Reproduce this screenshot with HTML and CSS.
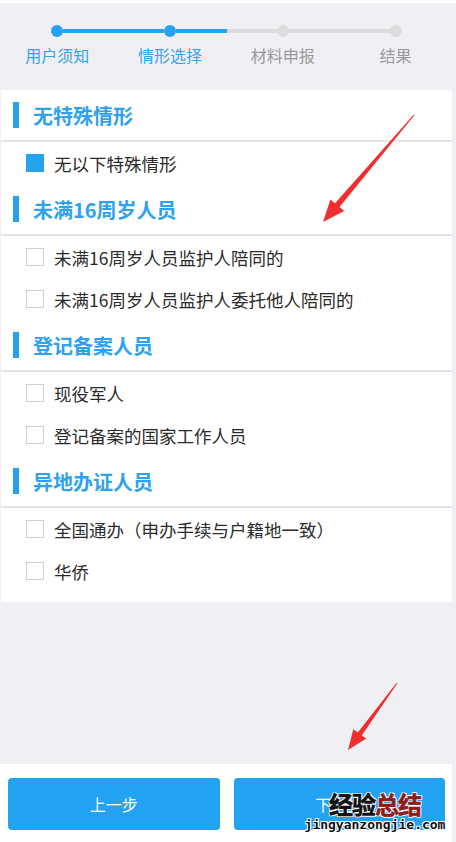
FILE: index.html
```html
<!DOCTYPE html>
<html lang="zh-CN">
<head>
  <meta charset="UTF-8">
  <meta name="viewport" content="width=device-width, initial-scale=1.0">
  <title>情形选择</title>
  <link rel="stylesheet" href="styles.css">
</head>
<body>
  <div class="page">
    <div class="topbar"></div>

    <!-- 步骤条 -->
    <div class="stepper">
      <div class="step done">
        <div class="track"><span class="seg none"></span><span class="dot"></span><span class="seg on"></span></div>
        <div class="step-label">用户须知</div>
      </div>
      <div class="step done">
        <div class="track"><span class="seg on"></span><span class="dot"></span><span class="seg on"></span></div>
        <div class="step-label">情形选择</div>
      </div>
      <div class="step">
        <div class="track"><span class="seg"></span><span class="dot"></span><span class="seg"></span></div>
        <div class="step-label">材料申报</div>
      </div>
      <div class="step">
        <div class="track"><span class="seg"></span><span class="dot"></span><span class="seg none"></span></div>
        <div class="step-label">结果</div>
      </div>
    </div>

    <!-- 情形列表 -->
    <div class="card">
      <div class="group-title"><span class="bar"></span>无特殊情形</div>
      <ul class="options">
        <li class="option"><span class="check checked"></span>无以下特殊情形</li>
      </ul>

      <div class="group-title"><span class="bar"></span>未满16周岁人员</div>
      <ul class="options">
        <li class="option"><span class="check"></span>未满16周岁人员监护人陪同的</li>
        <li class="option"><span class="check"></span>未满16周岁人员监护人委托他人陪同的</li>
      </ul>

      <div class="group-title"><span class="bar"></span>登记备案人员</div>
      <ul class="options">
        <li class="option"><span class="check"></span>现役军人</li>
        <li class="option"><span class="check"></span>登记备案的国家工作人员</li>
      </ul>

      <div class="group-title"><span class="bar"></span>异地办证人员</div>
      <ul class="options">
        <li class="option"><span class="check"></span>全国通办（申办手续与户籍地一致）</li>
        <li class="option"><span class="check"></span>华侨</li>
      </ul>
    </div>

    <div class="spacer"></div>

    <!-- 底部按钮 -->
    <div class="footer">
      <button class="btn">上一步</button>
      <button class="btn">下一步</button>
    </div>

    <!-- 标注箭头 -->
    <svg class="marks" width="456" height="842" viewBox="0 0 456 842">
      <polygon fill="#ef2f2f" points="414.4,115.3 339.6,207.1 344.2,211 323,222 330.4,199.4 335,203.3 413.6,114.7"/>
      <polygon fill="#ef2f2f" points="397.4,683.3 361.8,735.4 366.3,738.6 348,750 353.3,729.2 357.8,732.4 396.6,682.7"/>
    </svg>

    <div class="watermark">
      <div class="wm-title">经验<span class="wm-red">总结</span></div>
      <div class="wm-url">jingyanzongjie.com</div>
    </div>
  </div>
</body>
</html>
```

FILE: styles.css
```css
body {
  margin: 0;
  padding: 0;
  background-color: #efeff4;
  font-family: 'Noto Sans CJK SC', 'Noto Sans', sans-serif;
  color: #333333;
}

.page {
  position: relative;
  width: 456px;
  min-height: 100vh;
  display: flex;
  flex-direction: column;
  box-sizing: border-box;
  padding: 0 4px 0 1px;
}

.topbar {
  height: 3px;
  background-color: #ffffff;
  margin: 0 -4px 0 -1px;
}

/* 步骤条 */
.stepper {
  display: flex;
  padding: 22px 0 25px;
}

.step {
  flex: 1;
  display: flex;
  flex-direction: column;
  align-items: center;
}

.track {
  width: 100%;
  height: 12px;
  display: flex;
  align-items: center;
}

.seg {
  flex: 1;
  height: 4px;
  background-color: #dcdcdc;
}

.seg.on {
  background-color: #27a2ee;
}

.seg.none {
  background-color: transparent;
}

.dot {
  width: 12px;
  height: 12px;
  border-radius: 50%;
  background-color: #dcdcdc;
}

.step.done .dot {
  background-color: #27a2ee;
}

.step-label {
  margin-top: 8px;
  font-size: 16px;
  line-height: 20px;
  color: #9a9a9a;
}

.step.done .step-label {
  color: #33a3ea;
}

/* 列表卡片 */
.card {
  background-color: #ffffff;
  padding-bottom: 10px;
}

.group-title {
  height: 50px;
  display: flex;
  align-items: center;
  padding-left: 12px;
  font-size: 20px;
  font-weight: bold;
  color: #2ea2ee;
  border-bottom: 2px solid #e4e4e8;
}

.bar {
  width: 6px;
  height: 26px;
  background-color: #27a2ee;
  margin-right: 14px;
}

.options {
  list-style: none;
  margin: 0;
  padding: 0;
}

.option {
  height: 42px;
  display: flex;
  align-items: center;
  padding-left: 25px;
  font-size: 17.5px;
  color: #2b2b2b;
}

.check {
  width: 18px;
  height: 18px;
  box-sizing: border-box;
  border: 1px solid #cfcfcf;
  margin-right: 10px;
  background-color: #ffffff;
}

.check.checked {
  border-color: #27a2ee;
  background-color: #27a2ee;
}

.spacer {
  flex: 1;
}

/* 底部 */
.footer {
  display: flex;
  gap: 14px;
  background-color: #ffffff;
  padding: 14px 7px 12px 8px;
  margin-left: -1px;
}

.btn {
  flex: 1;
  height: 52px;
  border: none;
  border-radius: 4px;
  background-color: #22a3f2;
  color: #ffffff;
  font-family: 'Noto Sans CJK SC', sans-serif;
  font-size: 16px;
  cursor: pointer;
}

/* 标注与水印 */
.marks {
  position: absolute;
  top: 0;
  left: 0;
  pointer-events: none;
}

.watermark {
  position: absolute;
  left: 305px;
  top: 790px;
  display: flex;
  flex-direction: column;
  align-items: center;
  width: 140px;
  pointer-events: none;
}

.wm-title {
  font-size: 24px;
  line-height: 28px;
  font-weight: bold;
  color: #111111;
  letter-spacing: -1px;
  -webkit-text-stroke: 0.6px currentColor;
  text-shadow: -1px -1px 0 #fff, 1px -1px 0 #fff, -1px 1px 0 #fff, 1px 1px 0 #fff;
}

.wm-red {
  color: #8e1c1c;
}

.wm-url {
  font-family: 'DejaVu Sans Mono', monospace;
  font-weight: bold;
  font-size: 13px;
  line-height: 14px;
  color: #111111;
  text-shadow: -1px -1px 0 #fff, 1px -1px 0 #fff, -1px 1px 0 #fff, 1px 1px 0 #fff;
}
```
